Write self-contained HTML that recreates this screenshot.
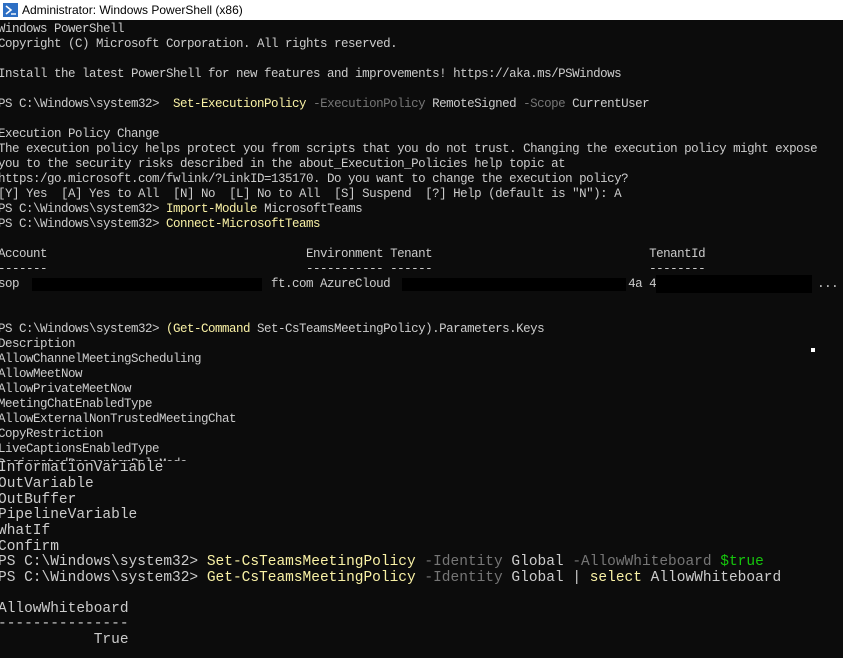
<!DOCTYPE html>
<html><head><meta charset="utf-8"><style>
html,body{margin:0;padding:0;width:843px;height:658px;overflow:hidden;background:#0c0c0c}
.tb{position:absolute;left:0;top:0;width:843px;height:20px;background:#fff}
.tb span{position:absolute;left:22px;top:3px;font:12px "Liberation Sans",sans-serif;color:#000}
.l{position:absolute;left:-2px;white-space:pre;font-family:"Liberation Mono",monospace;font-size:12.5px;letter-spacing:-0.5px;color:#cccccc;line-height:15px}
.b{position:absolute;left:-2px;white-space:pre;font-family:"Liberation Mono",monospace;font-size:14.5px;color:#cccccc;line-height:16px}
.y{color:#f9f1a5}.g{color:#767676}.gr{color:#16c60c}
.r{position:absolute;background:#000}
.bot{position:absolute;left:0;top:461px;width:843px;height:197px;background:#0c0c0c}
</style></head><body>
<div class="tb"><svg style="position:absolute;left:3px;top:3px" width="15" height="14"><rect width="15" height="14" fill="#2d6fc4"/><path d="M3 3l5 4-5 4" stroke="#fff" stroke-width="1.6" fill="none"/><path d="M8 11h5" stroke="#fff" stroke-width="1.4"/></svg><span>Administrator: Windows PowerShell (x86)</span></div>
<div class="l" style="top:22px">Windows PowerShell</div>
<div class="l" style="top:37px">Copyright (C) Microsoft Corporation. All rights reserved.</div>
<div class="l" style="top:67px">Install the latest PowerShell for new features and improvements! https://aka.ms/PSWindows</div>
<div class="l" style="top:97px">PS C:\Windows\system32>  <span class="y">Set-ExecutionPolicy</span> <span class="g">-ExecutionPolicy</span> RemoteSigned <span class="g">-Scope</span> CurrentUser</div>
<div class="l" style="top:127px">Execution Policy Change</div>
<div class="l" style="top:142px">The execution policy helps protect you from scripts that you do not trust. Changing the execution policy might expose</div>
<div class="l" style="top:157px">you to the security risks described in the about_Execution_Policies help topic at</div>
<div class="l" style="top:172px">https:/go.microsoft.com/fwlink/?LinkID=135170. Do you want to change the execution policy?</div>
<div class="l" style="top:187px">[Y] Yes  [A] Yes to All  [N] No  [L] No to All  [S] Suspend  [?] Help (default is "N"): A</div>
<div class="l" style="top:202px">PS C:\Windows\system32> <span class="y">Import-Module</span> MicrosoftTeams</div>
<div class="l" style="top:217px">PS C:\Windows\system32> <span class="y">Connect-MicrosoftTeams</span></div>
<div class="l" style="top:247px">Account                                     Environment Tenant                               TenantId</div>
<div class="l" style="top:262px">-------                                     ----------- ------                               --------</div>
<div class="l" style="top:277px">sop                                    ft.com AzureCloud  45                              4a 4                       ...</div>
<div class="r" style="left:32px;top:278px;width:230px;height:13px"></div>
<div class="r" style="left:402px;top:278px;width:224px;height:13px"></div>
<div class="r" style="left:656px;top:275px;width:156px;height:18px"></div>
<div class="l" style="top:322px">PS C:\Windows\system32> <span class="y">(Get-Command</span> Set-CsTeamsMeetingPolicy).Parameters.Keys</div>
<div class="l" style="top:337px">Description</div>
<div class="l" style="top:352px">AllowChannelMeetingScheduling</div>
<div class="l" style="top:367px">AllowMeetNow</div>
<div class="l" style="top:382px">AllowPrivateMeetNow</div>
<div class="l" style="top:397px">MeetingChatEnabledType</div>
<div class="l" style="top:412px">AllowExternalNonTrustedMeetingChat</div>
<div class="l" style="top:427px">CopyRestriction</div>
<div class="l" style="top:442px">LiveCaptionsEnabledType</div>
<div class="l" style="top:457px">DesignatedPresenterRoleMode</div>
<div style="position:absolute;left:811px;top:348px;width:4px;height:4px;background:#fff"></div>
<div class="bot"></div>
<div class="b" style="top:460px">InformationVariable</div>
<div class="b" style="top:476px">OutVariable</div>
<div class="b" style="top:492px">OutBuffer</div>
<div class="b" style="top:507px">PipelineVariable</div>
<div class="b" style="top:523px">WhatIf</div>
<div class="b" style="top:539px">Confirm</div>
<div class="b" style="top:554px">PS C:\Windows\system32> <span class="y">Set-CsTeamsMeetingPolicy</span> <span class="g">-Identity</span> Global <span class="g">-AllowWhiteboard</span> <span class="gr">$true</span></div>
<div class="b" style="top:570px">PS C:\Windows\system32> <span class="y">Get-CsTeamsMeetingPolicy</span> <span class="g">-Identity</span> Global | <span class="y">select</span> AllowWhiteboard</div>
<div class="b" style="top:601px">AllowWhiteboard</div>
<div class="b" style="top:616px">---------------</div>
<div class="b" style="top:632px">           True</div>
</body></html>
